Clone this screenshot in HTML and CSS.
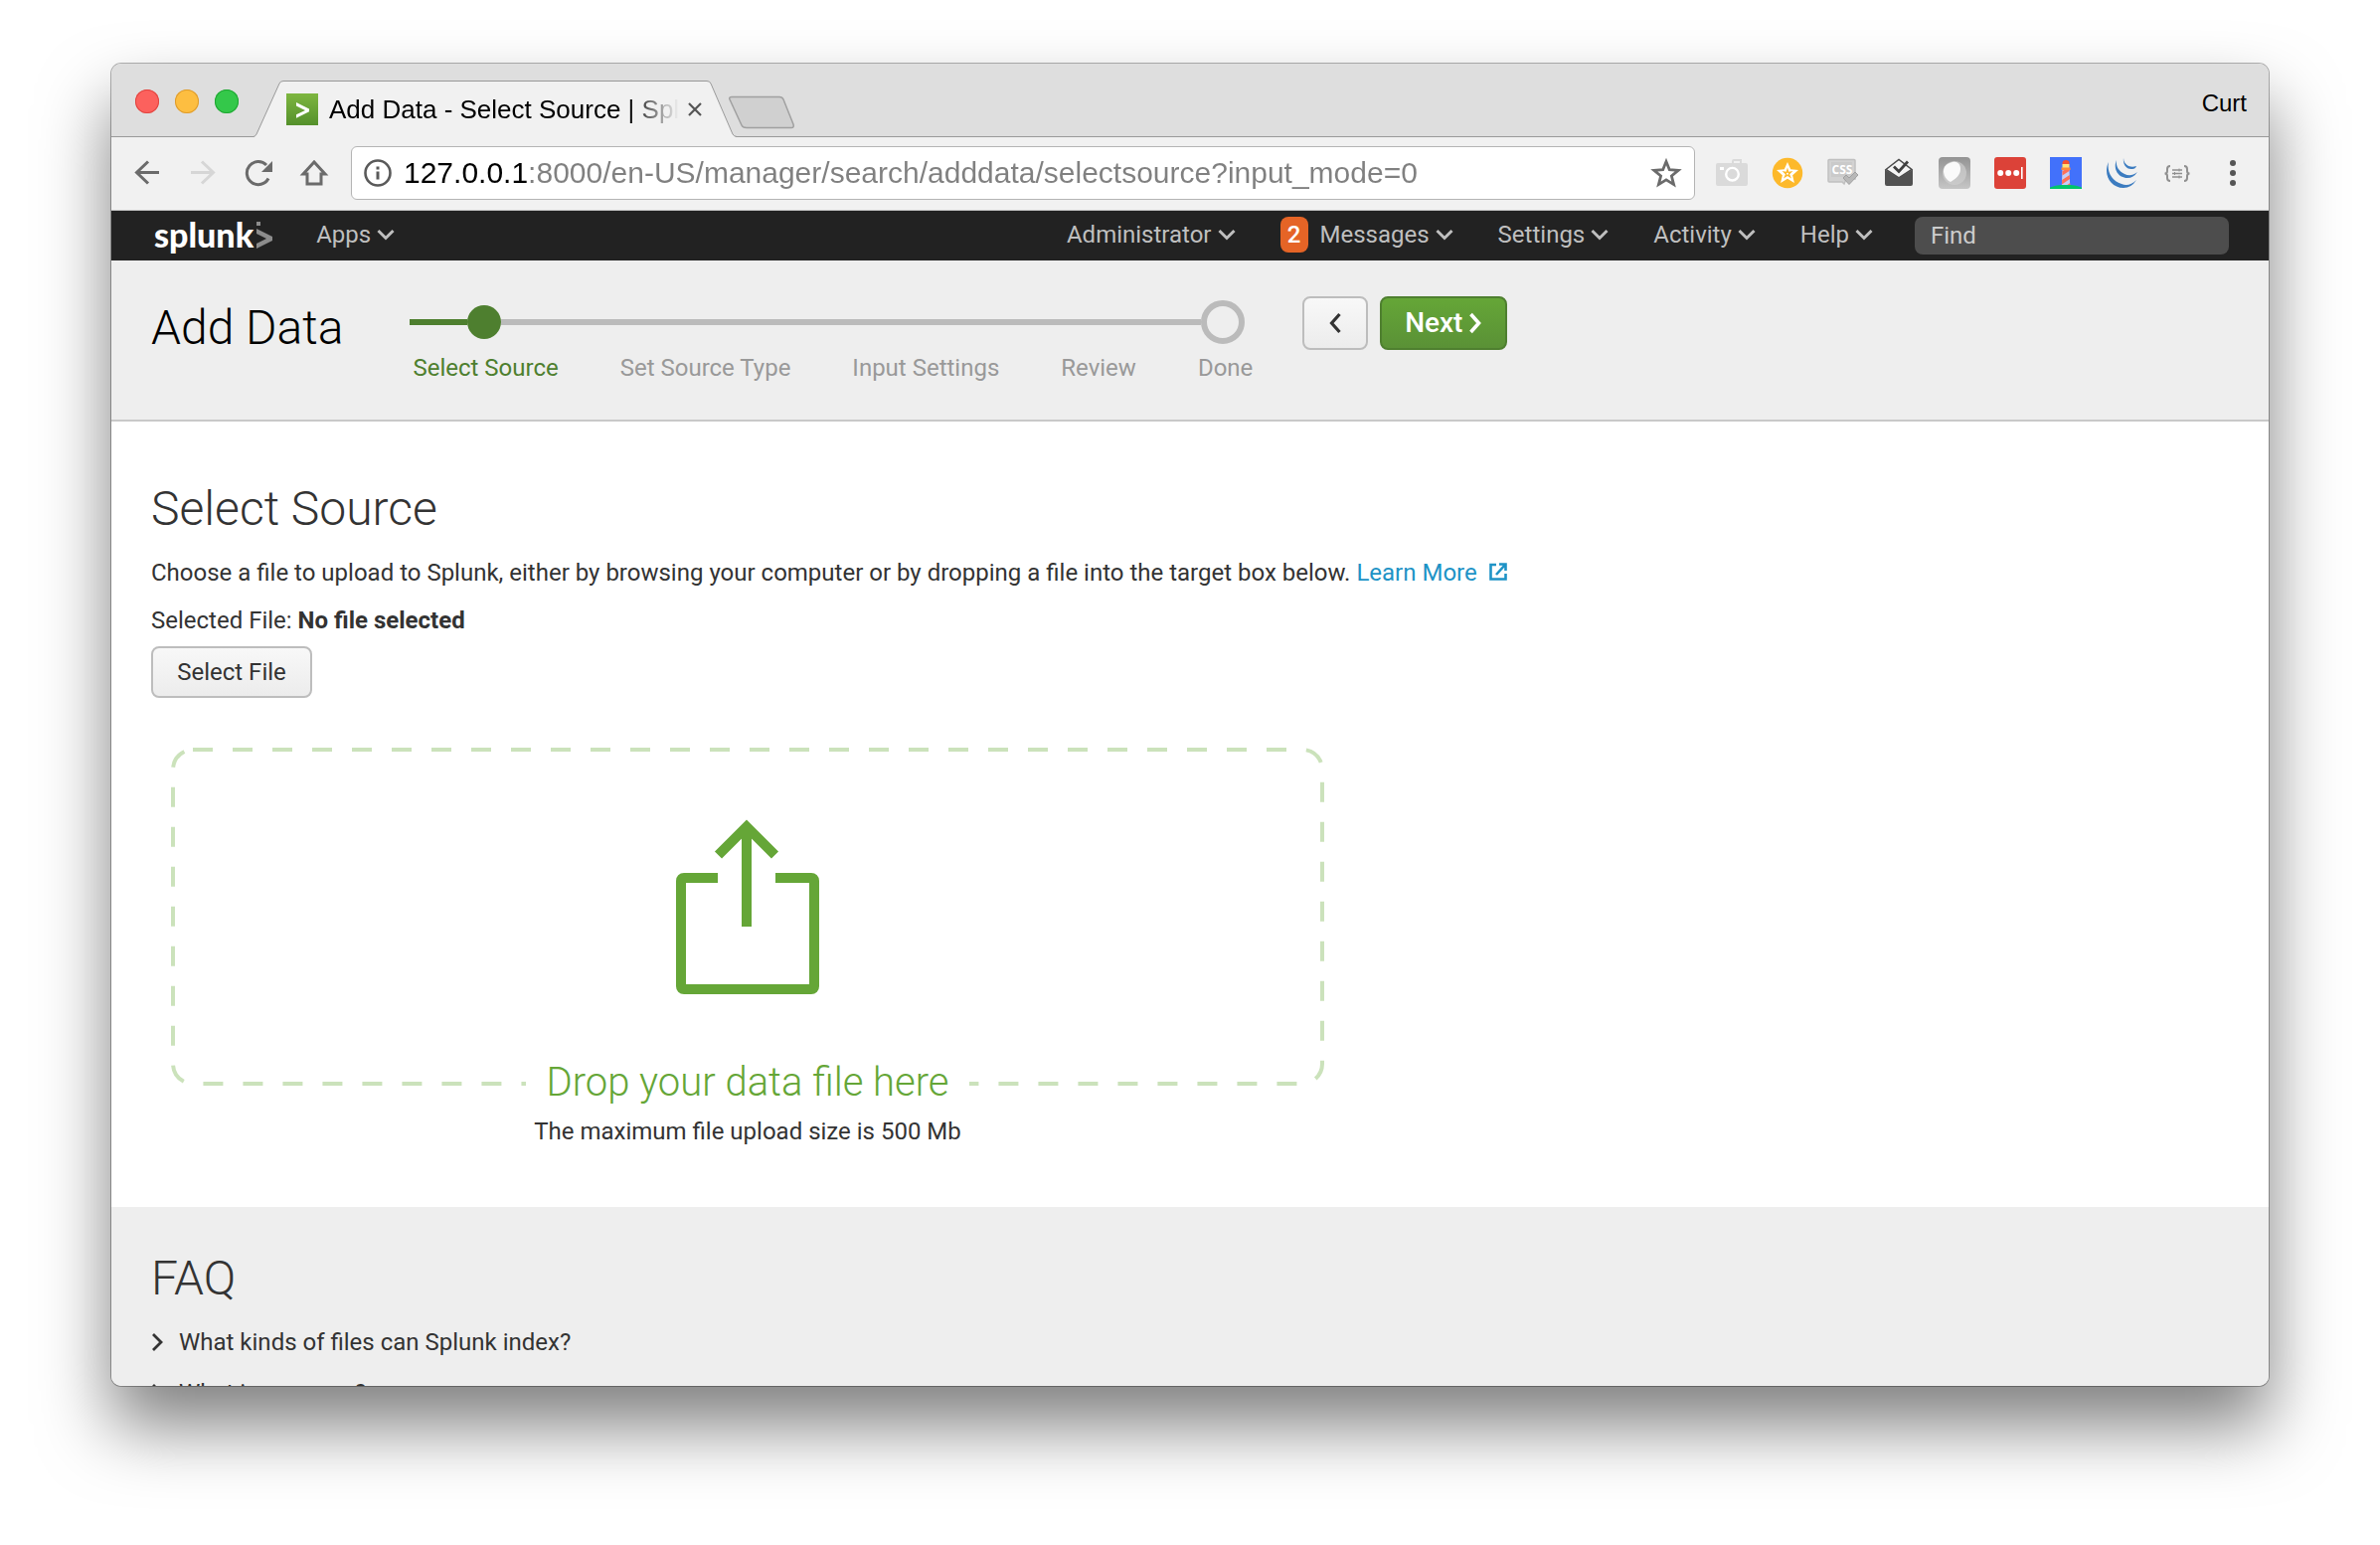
FILE: index.html
```html
<!DOCTYPE html>
<html lang="en">
<head>
<meta charset="utf-8">
<title>Add Data - Select Source | Splunk</title>
<link rel="stylesheet" href="styles.css">
</head>
<body>
<div class="window">
  <div class="tabstrip">
    <div class="lights">
      <button class="light light-close" aria-label="Close window"></button>
      <button class="light light-min" aria-label="Minimize window"></button>
      <button class="light light-max" aria-label="Zoom window"></button>
    </div>
    <div class="tab">
      <svg class="tab-shape" viewBox="0 0 486 57" width="486" height="57" aria-hidden="true">
        <path d="M0 57 Q2 56 3 54 L26 3 Q27 0.5 30 0.5 H456 Q459 0.5 460 3 L482 54 Q483 56 486 57 Z" fill="#f1f1f1"/>
        <path d="M0 56.500 Q2 56 3 54 L26 3 Q27 0.500 30 0.500 H456 Q459 0.500 460 3 L482 54 Q483 56 486 56.500" fill="none" stroke="#9a9a9a"/>
      </svg>
      <svg class="favicon" viewBox="0 0 32 32" width="32" height="32" aria-hidden="true">
        <defs><linearGradient id="fav" x1="0" y1="0" x2="0" y2="1"><stop offset="0" stop-color="#7eb640"/><stop offset="1" stop-color="#54902b"/></linearGradient></defs>
        <path d="M0 0h32v32H0z" fill="url(#fav)"/>
        <path d="M10 9v3.600l9 4.400-9 4.200v3.600l13-6.600v-2.600z" fill="#fff"/>
      </svg>
      <span class="tab-title">Add Data - Select Source | Spl</span>
      <button class="tab-close" aria-label="Close tab">
        <svg viewBox="0 0 16 16" width="16" height="16"><path d="M2 2l12 12M14 2L2 14" stroke="#555" stroke-width="2.200"/></svg>
      </button>
    </div>
    <button class="new-tab" aria-label="New tab">
      <svg viewBox="0 0 68 34" width="68" height="34"><path d="M4 1.500H52Q55 1.500 56 4L66 29Q67 32.500 64 32.500H19Q15 32.500 14 30L2 4Q1 1.500 4 1.500z" fill="#d0d0d0" stroke="#a0a0a0" stroke-width="1.500"/></svg>
    </button>
    <span class="profile">Curt</span>
  </div>

  <div class="toolbar">
    <div class="nav-buttons">
      <button class="icon-button" aria-label="Back"><svg viewBox="0 0 32 32" width="32" height="32"><path d="M28 15.500H6M17 4.500L5.500 15.500l11.500 11" fill="none" stroke="#6b6b6b" stroke-width="3"/></svg></button>
      <button class="icon-button" aria-label="Forward"><svg viewBox="0 0 32 32" width="32" height="32"><path d="M4 15.500h22M15 4.500l11.500 11L15 26.500" fill="none" stroke="#d6d6d6" stroke-width="3"/></svg></button>
      <button class="icon-button" aria-label="Reload"><svg viewBox="0 0 32 32" width="32" height="32"><path d="M26 21.500A11.500 11.500 0 1 1 24 8" fill="none" stroke="#6b6b6b" stroke-width="3"/><path d="M30 4v11H19z" fill="#6b6b6b"/></svg></button>
      <button class="icon-button" aria-label="Home"><svg viewBox="0 0 32 32" width="32" height="32"><path d="M16 5L5 17h4v10h14V17h4z" fill="none" stroke="#6b6b6b" stroke-width="3"/></svg></button>
    </div>
    <div class="omnibox">
      <svg viewBox="0 0 28 28" width="28" height="28" aria-hidden="true"><circle cx="14" cy="14" r="12.500" fill="none" stroke="#5a5a5a" stroke-width="2.600"/><path d="M14 7.500v3M14 12.500v8" stroke="#5a5a5a" stroke-width="3"/></svg>
      <input class="url" type="text" aria-label="Address" value="127.0.0.1:8000/en-US/manager/search/adddata/selectsource?input_mode=0">
      <button class="icon-button" aria-label="Bookmark"><svg viewBox="0 0 32 32" width="32" height="32"><path d="M16 4.500l3.300 8.200 8.900.6-6.800 5.700 2.200 8.600L16 22.900l-7.600 4.700 2.200-8.600-6.800-5.700 8.900-.6z" fill="none" stroke="#6b6b6b" stroke-width="2.800"/></svg></button>
    </div>
    <div class="extensions">
      <button class="icon-button" aria-label="Screenshot"><svg viewBox="0 0 32 32" width="32" height="32"><path d="M2 6h14V4q0-2 2-2h8v4h4q2 0 2 2v19q0 2-2 2H2q-2 0-2-2V8q0-2 2-2z" fill="#dadada"/><path d="M18 4h6v2h-6z" fill="#f1f1f1"/><circle cx="16.500" cy="17.200" r="6.300" fill="none" stroke="#fff" stroke-width="2.400"/><path d="M4 10h4v3H4z" fill="#fff"/></svg></button>
      <button class="icon-button" aria-label="Favorites"><svg viewBox="0 0 32 32" width="32" height="32"><circle cx="16" cy="16" r="15.200" fill="#fdb92b"/><path d="M16 5l3.200 7.300 7.800.7-5.900 5.200 1.800 7.800-6.900-4.200L9.100 26l1.800-7.800L5 13l7.800-.7z" fill="#fff"/><path d="M16 10.500l1.300 4.300 4.200-.8-3.400 3.200 1.900 4.200-4-2.500-4 2.500 1.900-4.200-3.400-3.200 4.200.8z" fill="#fdb92b"/><circle cx="16" cy="16.800" r="1" fill="#fff"/></svg></button>
      <button class="icon-button" aria-label="CSS validator"><svg viewBox="0 0 32 32" width="32" height="32"><path d="M2 2.500h25q1 0 1 1V22h-9l-2 5-2-2H2q-1 0-1-1V3.500q0-1 1-1z" fill="#d2d2d2" stroke="#c0c0c0" stroke-width="1.500"/><path d="M4 5h21v15H4z" fill="#cacaca"/><text x="15" y="17" text-anchor="middle" class="css-mark">CSS</text><path d="M16 21l3-3 3 3 6-6 3 3-9 9.500z" fill="#b8b8b8" stroke="#a0a0a0"/></svg></button>
      <button class="icon-button" aria-label="Inbox"><svg viewBox="0 0 32 32" width="32" height="32"><path d="M3 12.500L16 2.500l13 10L16 21z" fill="#f4f4f4" stroke="#4b4b4b" stroke-width="1.500"/><path d="M2 12.500L16 21l14-8.500V27q0 2-2 2H4q-2 0-2-2z" fill="#525252"/><path d="M11 9.500l5 5 9-10" fill="none" stroke="#404040" stroke-width="2.800"/></svg></button>
      <button class="icon-button" aria-label="Mask"><svg viewBox="0 0 32 32" width="32" height="32"><defs><linearGradient id="egg" x1="0" y1="0" x2="0" y2="1"><stop offset="0" stop-color="#939393"/><stop offset="1" stop-color="#c6c6c6"/></linearGradient></defs><rect width="32" height="32" rx="4" fill="url(#egg)"/><circle cx="16" cy="16" r="12" fill="#cfcfcf" opacity=".7"/><path d="M14 5c5-1 8 2 8 7 0 6-5 10-10 13-4-2-7-6-7-11 0-5 4-8 9-9z" fill="#fafafa"/></svg></button>
      <button class="icon-button" aria-label="Passwords"><svg viewBox="0 0 32 32" width="32" height="32"><rect width="32" height="32" rx="3" fill="#dc4238"/><circle cx="6.200" cy="16" r="3" fill="#fff"/><circle cx="14.200" cy="16" r="3" fill="#fff"/><circle cx="22.200" cy="16" r="3" fill="#fff"/><path d="M27 10h1.600v12H27z" fill="#fff"/></svg></button>
      <button class="icon-button" aria-label="Lighthouse"><svg viewBox="0 0 32 32" width="32" height="32"><path d="M0 0h32v32H0z" fill="#4271fb"/><path d="M12.500 12h7l.7 18h-8.400z" fill="#c7cdf4"/><path d="M12.500 14l4-2h3v2l-7 4.500zM12.200 23l7.600-5 .2 4-8 5.500zM16 29l4.200-3 .2 4h-5z" fill="#ff7058"/><path d="M12.500 7.500V6q0-3 3.500-3t3.500 3v1.500z" fill="#f4532e"/><path d="M12.500 7h7v4h-7z" fill="#ffe27a"/><path d="M11.500 10.500h9V13h-9z" fill="#ff8a3c"/><path d="M0 32v-1.500q6-2.500 11-2.500h10q5 0 11 2.500V32z" fill="#00c46a"/></svg></button>
      <button class="icon-button" aria-label="jQuery"><svg viewBox="0 0 32 32" width="32" height="32"><path d="M3 5C-3 17 5 31 18 31q8 0 13-8c-5 5-10 6-15 4C6 24 1 14 3 5z" fill="#3c7cc0"/><path d="M11 3C7 12 13 21 22 21q6 0 10-6c-5 4-9 4-13 2C13 14 10 9 11 3z" fill="#3c7cc0"/><path d="M18 1c-1 6 3 12 9 11q3 0 4-3c-3 1-5 1-8 0-3-2-5-4-5-8z" fill="#3c7cc0"/></svg></button>
      <button class="icon-button" aria-label="JSON viewer"><svg viewBox="0 0 32 32" width="32" height="32"><path d="M9 9q-3 0-3 3v2q0 2.500-2.500 2.500Q6 16.500 6 19v2q0 3 3 3M23 9q3 0 3 3v2q0 2.500 2.500 2.500Q26 16.500 26 19v2q0 3-3 3" fill="none" stroke="#909090" stroke-width="2"/><path d="M11 13h10M11 16.500h10M11 20h10" stroke="#909090" stroke-width="1.500"/><path d="M18 11.500v3M13.500 15v3M18 18.500v3" stroke="#909090"/></svg></button>
    </div>
    <button class="icon-button menu" aria-label="Menu"><svg viewBox="0 0 32 32" width="32" height="32"><circle cx="16" cy="6" r="3" fill="#555"/><circle cx="16" cy="16" r="3" fill="#555"/><circle cx="16" cy="26" r="3" fill="#555"/></svg></button>
  </div>

  <nav class="navbar">
    <a class="brand" href="#">splunk<svg viewBox="0 0 20 36" width="20" height="36" aria-hidden="true"><path d="M2 12v5l10 5-10 5v5l16-8v-4z" fill="#8c8c8c"/><path d="M2 5h4v4H2z" fill="#8c8c8c"/></svg></a>
    <button class="nav-item">Apps<svg class="caret" viewBox="0 0 18 12" width="18" height="12"><path d="M1.500 2L9 9.500 16.500 2" /></svg></button>
    <div class="nav-right">
      <button class="nav-item">Administrator<svg class="caret" viewBox="0 0 18 12" width="18" height="12"><path d="M1.500 2L9 9.500 16.500 2" /></svg></button>
      <button class="nav-item"><span class="badge">2</span>Messages<svg class="caret" viewBox="0 0 18 12" width="18" height="12"><path d="M1.500 2L9 9.500 16.500 2" /></svg></button>
      <button class="nav-item">Settings<svg class="caret" viewBox="0 0 18 12" width="18" height="12"><path d="M1.500 2L9 9.500 16.500 2" /></svg></button>
      <button class="nav-item">Activity<svg class="caret" viewBox="0 0 18 12" width="18" height="12"><path d="M1.500 2L9 9.500 16.500 2" /></svg></button>
      <button class="nav-item">Help<svg class="caret" viewBox="0 0 18 12" width="18" height="12"><path d="M1.500 2L9 9.500 16.500 2" /></svg></button>
    </div>
    <input class="find" type="text" placeholder="Find" aria-label="Find">
  </nav>

  <header class="page-header">
    <h1 class="page-title">Add Data</h1>
    <div class="wizard">
      <div class="track"><span class="done-line"></span><span class="dot"></span><span class="todo-line"></span><span class="ring"></span></div>
      <ol class="steps">
        <li class="step step-active">Select Source</li>
        <li class="step">Set Source Type</li>
        <li class="step">Input Settings</li>
        <li class="step">Review</li>
        <li class="step">Done</li>
      </ol>
    </div>
    <div class="wizard-buttons">
      <button class="btn btn-back" aria-label="Previous"><svg viewBox="0 0 14 22" width="14" height="22"><path d="M11.500 2L3.500 11l8 9" fill="none" stroke="#333" stroke-width="3.200"/></svg></button>
      <button class="btn btn-next">Next<svg viewBox="0 0 14 22" width="14" height="22"><path d="M2.500 2l8 9-8 9" fill="none" stroke="#fff" stroke-width="3.600"/></svg></button>
    </div>
  </header>

  <main class="content">
    <h2 class="heading">Select Source</h2>
    <p class="intro">Choose a file to upload to Splunk, either by browsing your computer or by dropping a file into the target box below. <a class="link" href="#">Learn More<svg viewBox="0 0 18 18" width="18" height="18" aria-hidden="true"><path d="M7 2H1.500v14.500h15V11M10 1.500h6.500V8M16 2L7 12" fill="none" stroke="#1e93c6" stroke-width="2.600"/></svg></a></p>
    <p class="selected">Selected File: <strong>No file selected</strong></p>
    <button class="btn btn-file">Select File</button>
    <section class="dropzone">
      <svg class="outline" viewBox="0 0 1160 340" width="1160" height="340" aria-hidden="true"><rect x="2" y="2" width="1156" height="336" rx="20" fill="none" stroke="#cbe2bb" stroke-width="4" stroke-dasharray="20 20"/></svg>
      <svg class="upload" viewBox="0 0 144 176" width="144" height="176" aria-hidden="true"><path d="M42 59H8q-3 0-3 3v106q0 3 3 3h128q3 0 3-3V62q0-3-3-3h-36" fill="none" stroke="#65a637" stroke-width="10"/><path d="M71 108V8M42.500 36L71 7.500 99.500 36" fill="none" stroke="#65a637" stroke-width="10"/></svg>
      <p class="drop-title">Drop your data file here</p>
      <p class="drop-note">The maximum file upload size is 500 Mb</p>
    </section>
  </main>

  <section class="faq">
    <h2 class="heading">FAQ</h2>
    <ul class="questions">
      <li><button class="question"><svg viewBox="0 0 12 20" width="12" height="20"><path d="M2 2l8 8-8 8" fill="none" stroke="#333" stroke-width="2.800"/></svg>What kinds of files can Splunk index?</button></li>
      <li><button class="question"><svg viewBox="0 0 12 20" width="12" height="20"><path d="M2 2l8 8-8 8" fill="none" stroke="#333" stroke-width="2.800"/></svg>What is a source?</button></li>
    </ul>
  </section>
</div>
</body>
</html>
```
FILE: styles.css
```css
* { box-sizing: border-box; }

body {
  margin: 0;
  padding: 64px 112px 160px;
  height: 100vh;
  overflow: hidden;
  background: #fff;
  color: #333;
  font: 24px/32px Roboto, sans-serif;
}

h1, h2, p, ol, ul { margin: 0; padding: 0; }
ol, ul { list-style: none; }
svg { display: block; flex: none; }
button { margin: 0; padding: 0; border: 0; background: none; color: inherit; font: inherit; }
input { border: 0; outline: 0; padding: 0; background: none; font: inherit; min-width: 0; }

.window {
  display: flex;
  flex-direction: column;
  height: 100%;
  overflow: hidden;
  border-radius: 10px;
  background: #fff;
  box-shadow: 0 0 0 1px rgba(0, 0, 0, .3), 0 40px 70px rgba(0, 0, 0, .5);
}
.window > * { flex: none; }

/* Browser tab strip */
.tabstrip {
  display: flex;
  align-items: flex-end;
  height: 74px;
  padding: 0 22px 0 24px;
  background: #dedede;
  box-shadow: inset 0 -1px #9a9a9a;
  font: 26px/32px "Liberation Sans", Arial, sans-serif;
  color: #000;
}
.lights { display: flex; gap: 16px; margin-bottom: 24px; }
.light { width: 24px; height: 24px; border-radius: 50%; }
.light-close { background: #fc615d; box-shadow: inset 0 0 0 1px #e0443f; }
.light-min { background: #fdbe41; box-shadow: inset 0 0 0 1px #dd9b2e; }
.light-max { background: #34c84a; box-shadow: inset 0 0 0 1px #1fa632; }
.tab {
  position: relative;
  display: flex;
  align-items: center;
  width: 486px;
  height: 57px;
  margin-left: 15px;
  padding: 0 34px 0 33px;
}
.tab-shape { position: absolute; left: 0; top: 0; }
.favicon { position: relative; margin-right: 11px; }
.tab-title {
  position: relative;
  flex: 1;
  white-space: nowrap;
  -webkit-mask-image: linear-gradient(90deg, #000 300px, transparent 352px);
  mask-image: linear-gradient(90deg, #000 300px, transparent 352px);
}
.tab-close { position: relative; margin-left: 8px; }
.new-tab { margin: 0 0 8px -9px; }
.profile { margin: 0 0 18px auto; font-size: 24px; }

/* Browser toolbar */
.toolbar {
  display: flex;
  align-items: center;
  height: 74px;
  padding: 0 20px 1px;
  background: #f1f1f1;
  border-bottom: 1px solid #c4c4c4;
}
.nav-buttons, .extensions { display: flex; gap: 24px; }
.omnibox {
  display: flex;
  flex: 1;
  align-items: center;
  height: 54px;
  margin: 0 21px;
  padding: 0 12px;
  border: 1px solid #b4b4b4;
  border-radius: 6px;
  background: #fff;
}
.url {
  flex: 1;
  margin-left: 12px;
  height: 40px;
  font: 30px/40px "Liberation Sans", Arial, sans-serif;
  background: linear-gradient(90deg, #000 125px, #808080 125px);
  -webkit-background-clip: text;
  background-clip: text;
  color: transparent;
}
.menu { margin-left: 24px; }
.css-mark { font: bold 12px "Open Sans", sans-serif; fill: #fff; }

/* Application bar */
.navbar {
  display: flex;
  align-items: center;
  height: 50px;
  padding: 0 40px 0 43px;
  background: #222;
  color: #ccc;
}
.brand {
  display: flex;
  align-items: center;
  gap: 1px;
  margin-right: 42px;
  padding-bottom: 2px;
  color: #fff;
  font: 900 34px/44px Lato, sans-serif;
  text-decoration: none;
}
.nav-item { display: flex; align-items: center; padding-bottom: 2px; color: #bfbfbf; }
.caret { margin-left: 6px; fill: none; stroke: #bfbfbf; stroke-width: 3; }
.nav-right { display: flex; align-items: center; gap: 45px; margin: 0 42px 0 auto; }
.badge {
  width: 28px;
  height: 36px;
  margin-right: 12px;
  border-radius: 8px;
  background: #e56426;
  color: #fff;
  font-weight: 500;
  line-height: 36px;
}
.find {
  width: 316px;
  height: 38px;
  padding: 0 16px;
  border-radius: 8px;
  background: #4d4d4d;
  color: #fff;
}
.find::placeholder { color: #ccc; }

/* Page header with the wizard */
.page-header {
  display: flex;
  align-items: flex-start;
  padding: 36px 40px;
  border-bottom: 2px solid #c9c9c9;
  background: #eee;
}
.page-title { margin: 4px 67px 0 0; color: #000; font-size: 48px; font-weight: 300; line-height: 56px; }
.wizard { padding-top: 4px; }
.track { display: flex; align-items: center; height: 44px; padding-right: 8px; }
.done-line { width: 58px; height: 6px; background: #4e7f2f; }
.dot { width: 34px; height: 34px; border-radius: 50%; background: #4e7f2f; }
.todo-line { flex: 1; height: 6px; background: #bbb; }
.ring { width: 44px; height: 44px; border: 6px solid #bbb; border-radius: 50%; }
.steps { display: flex; gap: 62px; margin-top: 8px; padding-left: 3px; }
.step { color: #999; }
.step-active { color: #4e7f2f; }
.wizard-buttons { display: flex; gap: 12px; margin-left: 50px; }
.btn {
  display: flex;
  align-items: center;
  justify-content: center;
  border: 2px solid #bdbdbd;
  border-radius: 8px;
  background: linear-gradient(#f8f8f8, #ececec);
}
.btn-back { width: 66px; height: 54px; }
.btn-next {
  gap: 6px;
  width: 128px;
  height: 54px;
  border-color: #4e7f2f;
  background: linear-gradient(#65a637, #5a9136);
  color: #fff;
  font-size: 28px;
  font-weight: 500;
}

/* Upload area */
.content { padding: 60px 40px; background: #fff; }
.heading { margin-bottom: 20px; font-size: 48px; font-weight: 300; line-height: 56px; }
.intro { margin-bottom: 16px; }
.link { color: #1e93c6; text-decoration: none; }
.link svg { display: inline-block; margin-left: 12px; }
.selected { margin-bottom: 10px; }
.btn-file { width: 162px; height: 52px; }
.dropzone {
  position: relative;
  display: flex;
  flex-direction: column;
  align-items: center;
  max-width: 1160px;
  margin: 50px 0 0 20px;
  padding-top: 72px;
}
.outline { position: absolute; left: 0; top: 0; }
.upload { position: relative; margin-bottom: 65px; }
.drop-title {
  position: relative;
  margin-bottom: 9px;
  padding: 0 20px;
  background: #fff;
  color: #65a637;
  font-size: 40px;
  font-weight: 300;
  line-height: 48px;
}

/* FAQ */
.faq { flex: 1 0 auto; padding: 44px 40px; background: #eee; }
.questions { display: grid; gap: 19px; }
.question { display: flex; align-items: center; gap: 16px; }
```
